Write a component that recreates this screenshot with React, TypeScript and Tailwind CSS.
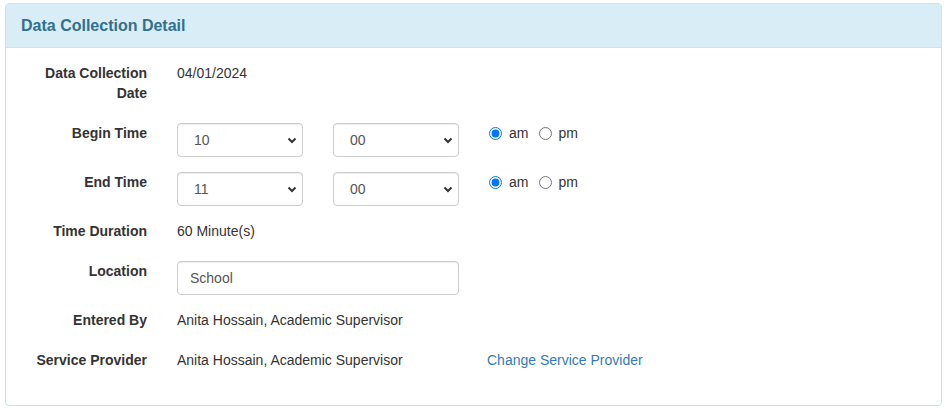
const Chevron = () => (
  <svg
    className="pointer-events-none absolute right-[6px] top-[14px] h-[7px] w-[10px]"
    viewBox="0 0 10 7"
    fill="none"
    stroke="#333"
    strokeWidth="2"
  >
    <path d="M1.5 1.5l3.5 3.5 3.5-3.5" />
  </svg>
);

function Select({ value }: { value: string }) {
  return (
    <div className="relative w-[126px]">
      <select
        defaultValue={value}
        className="h-[34px] w-full appearance-none rounded-[4px] border border-[#ccc] bg-white pl-[16px] pr-[20px] text-[14px] text-[#555] outline-none shadow-[inset_0_1px_1px_rgba(0,0,0,0.075)]"
      >
        <option>{value}</option>
      </select>
      <Chevron />
    </div>
  );
}

function AmPm({ name }: { name: string }) {
  return (
    <div className="flex h-[20px] items-center text-[14px] text-[#333]">
      <input type="radio" name={name} defaultChecked className="m-0 h-[13px] w-[13px]" />
      <span className="ml-[7px]">am</span>
      <input type="radio" name={name} className="m-0 ml-[11px] h-[13px] w-[13px]" />
      <span className="ml-[6px]">pm</span>
    </div>
  );
}

const Label = ({ children }: { children: React.ReactNode }) => (
  <div className="w-[156px] shrink-0 px-[15px] text-right font-bold leading-[20px]">{children}</div>
);

const Col = ({ children, w = "w-[156px]" }: { children: React.ReactNode; w?: string }) => (
  <div className={`${w} shrink-0 px-[15px] leading-[20px]`}>{children}</div>
);

export default function App() {
  return (
    <div
      className="min-h-screen bg-white pt-[3px] px-[5px] text-[14px] text-[#333]"
      style={{ fontFamily: '"Liberation Sans", Arial, sans-serif' }}
    >
      <div className="rounded-[4px] border border-[#bce8f1] bg-white">
        <div className="h-[44px] rounded-t-[3px] border-b border-[#bce8f1] bg-[#d9edf7] px-[15px] flex items-center">
          <h3 className="text-[16px] font-bold text-[#31708f]">Data Collection Detail</h3>
        </div>

        <div className="flex flex-col pt-[15px] pb-[35px]">
          <div className="flex">
            <Label>Data Collection Date</Label>
            <Col>04/01/2024</Col>
          </div>

          <div className="mt-[20px] flex">
            <Label>Begin Time</Label>
            <Col><Select value="10" /></Col>
            <Col><Select value="00" /></Col>
            <Col><AmPm name="begin" /></Col>
          </div>

          <div className="mt-[15px] flex">
            <Label>End Time</Label>
            <Col><Select value="11" /></Col>
            <Col><Select value="00" /></Col>
            <Col><AmPm name="end" /></Col>
          </div>

          <div className="mt-[15px] flex">
            <Label>Time Duration</Label>
            <Col>60 Minute(s)</Col>
          </div>

          <div className="mt-[20px] flex">
            <Label>Location</Label>
            <Col w="w-[312px]">
              <input
                defaultValue="School"
                className="h-[34px] w-full rounded-[4px] border border-[#ccc] px-[12px] text-[14px] text-[#555] outline-none shadow-[inset_0_1px_1px_rgba(0,0,0,0.075)]"
              />
            </Col>
          </div>

          <div className="mt-[15px] flex">
            <Label>Entered By</Label>
            <Col w="w-[312px]">Anita Hossain, Academic Supervisor</Col>
          </div>

          <div className="mt-[20px] flex">
            <Label>Service Provider</Label>
            <Col w="w-[312px]">Anita Hossain, Academic Supervisor</Col>
            <div className="pl-[13px] leading-[20px]">
              <a href="#" className="text-[#337ab7]">Change Service Provider</a>
            </div>
          </div>
        </div>
      </div>
    </div>
  );
}
